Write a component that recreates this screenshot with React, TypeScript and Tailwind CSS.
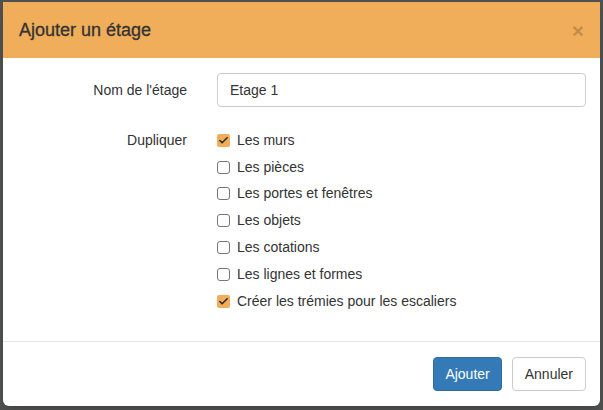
import { Check } from 'lucide-react'

const options = [
  { label: 'Les murs', checked: true },
  { label: 'Les pièces', checked: false },
  { label: 'Les portes et fenêtres', checked: false },
  { label: 'Les objets', checked: false },
  { label: 'Les cotations', checked: false },
  { label: 'Les lignes et formes', checked: false },
  { label: 'Créer les trémies pour les escaliers', checked: true },
]

function Box({ checked }: { checked: boolean }) {
  if (checked)
    return (
      <span className="flex h-[13px] w-[13px] items-center justify-center rounded-[2px] bg-[#f0ad5a]">
        <Check size={11} strokeWidth={3.5} className="text-[#2b2b2b]" />
      </span>
    )
  return <span className="h-[13px] w-[13px] rounded-[3px] border border-[#767676] bg-white" />
}

export default function App() {
  return (
    <div
      className="flex h-[410px] w-[603px] overflow-hidden bg-[#4f5150] pl-[3px] pt-[2px] text-[14px] text-[#333]"
      style={{ fontFamily: '"Liberation Sans", Arial, sans-serif' }}
    >
      <div className="flex h-[404px] w-[597px] flex-col overflow-hidden rounded-b-[6px] bg-white shadow-lg">
        <div className="flex h-[56px] shrink-0 items-center justify-between bg-[#f0ad5a] pl-[16px] pr-[16px]">
          <h4 className="text-[18px] leading-none text-[#333] [-webkit-text-stroke:0.3px_#333]">Ajouter un étage</h4>
          <span className="text-[21px] font-bold leading-none text-black/20">×</span>
        </div>

        <div className="flex flex-1 flex-col pt-[15px]">
          <div className="flex items-center">
            <label className="w-[184px] text-right">Nom de l'étage</label>
            <div className="ml-[30px] flex h-[34px] w-[369px] items-center rounded-[4px] border border-[#ccc] px-[12px]">
              Etage 1
            </div>
          </div>

          <div className="mt-[20px] flex">
            <label className="h-[26.8px] w-[184px] text-right leading-[26.8px]">Dupliquer</label>
            <div className="ml-[30px] flex flex-col">
              {options.map((o) => (
                <div key={o.label} className="flex h-[26.8px] items-center gap-[7px]">
                  <Box checked={o.checked} />
                  <span>{o.label}</span>
                </div>
              ))}
            </div>
          </div>
        </div>

        <div className="flex h-[65px] shrink-0 items-start justify-end gap-[10px] border-t border-[#e5e5e5] pr-[14px] pt-[15px]">
          <button className="h-[34px] rounded-[4px] border border-[#2e6da4] bg-[#337ab7] px-[11px] text-white">
            Ajouter
          </button>
          <button className="h-[34px] rounded-[4px] border border-[#ccc] bg-white px-[12px] text-[#333]">
            Annuler
          </button>
        </div>
      </div>
    </div>
  )
}
